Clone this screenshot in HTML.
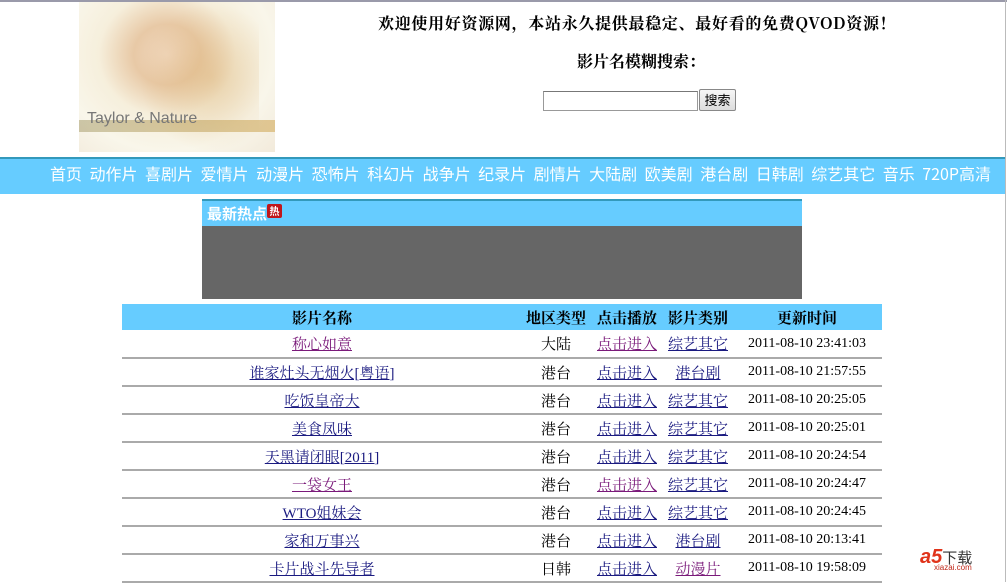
<!DOCTYPE html>
<html><head><meta charset="utf-8"><style>
*{margin:0;padding:0;box-sizing:border-box}
body{width:1007px;height:582px;overflow:hidden;background:#fff;font-family:"Liberation Serif","Noto Serif CJK SC","Noto Sans CJK SC",serif;font-size:14px;color:#000;position:relative}
.top{position:absolute;left:0;top:0;width:1007px;height:2px;background:#9a9aaa}
.rline{position:absolute;right:1px;top:0;width:1px;height:582px;background:#bbb}
.img{position:absolute;left:79px;top:2px;width:196px;height:150px;background:radial-gradient(ellipse at 45% 35%,#f1d8bf 0,#e8c9a6 22%,#f6efdc 45%,#f9f6ea 70%,#f2eadb 100%)}
.img .hair{position:absolute;left:60px;top:0;width:120px;height:150px;background:radial-gradient(ellipse at 60% 50%,rgba(220,180,120,.5),rgba(255,255,255,0) 70%)}
.img .t{position:absolute;left:8px;top:108px;font-family:"Liberation Sans",sans-serif;font-size:16px;color:#777}
.img .g{position:absolute;left:0;top:118px;width:196px;height:12px;background:linear-gradient(90deg,rgba(160,150,100,.5),rgba(210,170,90,.6))}
.w{position:absolute;left:378px;top:11px;font-size:16px;font-weight:bold;font-family:"Noto Serif CJK SC",serif;letter-spacing:0.7px}
.s{position:absolute;left:577px;top:49px;font-size:16px;font-weight:bold;font-family:"Noto Serif CJK SC",serif}
.in{position:absolute;left:543px;top:91px;width:155px;height:20px;border:1px solid #999;border-top-color:#777}
.bt{position:absolute;left:699px;top:89px;width:37px;height:22px;border:1px solid #888;border-radius:2px;background:linear-gradient(#f6f6f6,#ddd);font-size:13px;text-align:center;line-height:19px;font-family:"Noto Sans CJK SC",sans-serif}
.nav{position:absolute;left:0;top:157px;width:1005px;height:37px;background:#66ccff;border-top:2px solid #3399bb;color:#fff;font-size:16px;font-family:"Noto Sans CJK SC",sans-serif;white-space:nowrap;padding-left:50px;line-height:29px}
.nav span{margin-right:7.5px}
.hot{position:absolute;left:202px;top:199px;width:600px;height:100px;background:#666}
.hot .h{height:27px;background:#66ccff;border-top:2px solid #3399bb;color:#fff;font-weight:bold;font-size:15px;padding-left:5px;line-height:25px;font-family:"Noto Sans CJK SC",sans-serif}
.hot .h i{display:inline-block;width:15px;height:14px;background:#c0161b;color:#fff;font-size:10px;font-style:normal;line-height:14px;text-align:center;vertical-align:4px;border-radius:2px}
table{position:absolute;left:122px;top:304px;width:760px;border-collapse:collapse;table-layout:fixed}
th{background:#66ccff;height:26px;font-size:15px;font-weight:bold}
td{height:28px;text-align:center;border-bottom:2px solid #aaa;font-size:15px;white-space:nowrap}
td a{color:#1a1a80;text-decoration:underline}
td a.v{color:#7a1a7a}
td.d{font-size:14px}
.logo{position:absolute;left:920px;top:546px;font-family:"Liberation Sans",sans-serif}
</style></head><body>
<div class="top"></div><div class="rline"></div>
<div class="img"><div class="hair"></div><div class="g"></div><div class="t">Taylor &amp; Nature</div></div>
<div class="w">欢迎使用好资源网，本站永久提供最稳定、最好看的免费QVOD资源！</div>
<div class="s">影片名模糊搜索：</div>
<div class="in"></div><div class="bt">搜索</div>
<div class="nav"><span>首页</span><span>动作片</span><span>喜剧片</span><span>爱情片</span><span>动漫片</span><span>恐怖片</span><span>科幻片</span><span>战争片</span><span>纪录片</span><span>剧情片</span><span>大陆剧</span><span>欧美剧</span><span>港台剧</span><span>日韩剧</span><span>综艺其它</span><span>音乐</span><span>720P高清</span></div>
<div class="hot"><div class="h">最新热点<i>热</i></div></div>
<table>
<tr><th style="width:400px">影片名称</th><th style="width:68px">地区类型</th><th style="width:74px">点击播放</th><th style="width:68px">影片类别</th><th>更新时间</th></tr>
<tr><td><a class="v">称心如意</a></td><td>大陆</td><td><a class="v">点击进入</a></td><td><a>综艺其它</a></td><td class="d">2011-08-10 23:41:03</td></tr>
<tr><td><a>谁家灶头无烟火[粤语]</a></td><td>港台</td><td><a>点击进入</a></td><td><a>港台剧</a></td><td class="d">2011-08-10 21:57:55</td></tr>
<tr><td><a>吃饭皇帝大</a></td><td>港台</td><td><a>点击进入</a></td><td><a>综艺其它</a></td><td class="d">2011-08-10 20:25:05</td></tr>
<tr><td><a>美食凤味</a></td><td>港台</td><td><a>点击进入</a></td><td><a>综艺其它</a></td><td class="d">2011-08-10 20:25:01</td></tr>
<tr><td><a>天黑请闭眼[2011]</a></td><td>港台</td><td><a>点击进入</a></td><td><a>综艺其它</a></td><td class="d">2011-08-10 20:24:54</td></tr>
<tr><td><a class="v">一袋女王</a></td><td>港台</td><td><a class="v">点击进入</a></td><td><a>综艺其它</a></td><td class="d">2011-08-10 20:24:47</td></tr>
<tr><td><a>WTO姐妹会</a></td><td>港台</td><td><a>点击进入</a></td><td><a>综艺其它</a></td><td class="d">2011-08-10 20:24:45</td></tr>
<tr><td><a>家和万事兴</a></td><td>港台</td><td><a>点击进入</a></td><td><a>港台剧</a></td><td class="d">2011-08-10 20:13:41</td></tr>
<tr><td><a>卡片战斗先导者</a></td><td>日韩</td><td><a>点击进入</a></td><td><a class="v">动漫片</a></td><td class="d">2011-08-10 19:58:09</td></tr>
</table>
<div class="logo"><span style="color:#e0331a;font-weight:bold;font-size:20px;font-style:italic">a5</span><span style="font-family:'Noto Sans CJK SC',sans-serif;font-size:15px;color:#333">下载</span><div style="font-size:8px;color:#c0281a;margin:-6px 0 0 14px">xiazai.com</div></div>
</body></html>
